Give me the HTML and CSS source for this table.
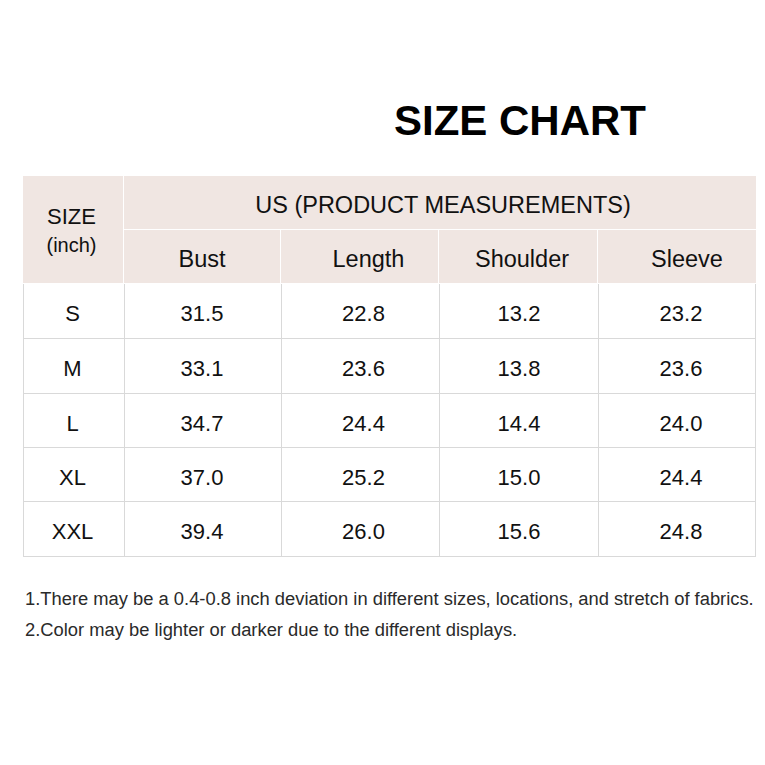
FILE: index.html
```html
<!DOCTYPE html>
<html>
<head>
<meta charset="utf-8">
<link rel="stylesheet" href="styles.css">
</head>
<body>
<div class="page">
  <h1 class="title">SIZE CHART</h1>
  <div class="chart">
    <div class="head">
      <div class="hcell size-cell"><span class="size-main">SIZE</span><span class="size-unit">(inch)</span></div>
      <div class="hcell group">US (PRODUCT MEASUREMENTS)</div>
      <div class="hcell c2">Bust</div>
      <div class="hcell c3">Length</div>
      <div class="hcell c4">Shoulder</div>
      <div class="hcell c5">Sleeve</div>
    </div>
    <div class="body">
      <div class="cell c1">S</div><div class="cell c2">31.5</div><div class="cell c3">22.8</div><div class="cell c4">13.2</div><div class="cell c5">23.2</div>
      <div class="cell c1">M</div><div class="cell c2">33.1</div><div class="cell c3">23.6</div><div class="cell c4">13.8</div><div class="cell c5">23.6</div>
      <div class="cell c1">L</div><div class="cell c2">34.7</div><div class="cell c3">24.4</div><div class="cell c4">14.4</div><div class="cell c5">24.0</div>
      <div class="cell c1">XL</div><div class="cell c2">37.0</div><div class="cell c3">25.2</div><div class="cell c4">15.0</div><div class="cell c5">24.4</div>
      <div class="cell c1">XXL</div><div class="cell c2">39.4</div><div class="cell c3">26.0</div><div class="cell c4">15.6</div><div class="cell c5">24.8</div>
    </div>
  </div>
  <div class="notes">
    <p>1.There may be a 0.4-0.8 inch deviation in different sizes, locations, and stretch of fabrics.</p>
    <p>2.Color may be lighter or darker due to the different displays.</p>
  </div>
</div>
</body>
</html>
```
FILE: styles.css
```css
html, body {
  margin: 0;
  padding: 0;
  background: #ffffff;
}

.page {
  width: 765px;
  height: 765px;
  font-family: "Liberation Sans", Arial, sans-serif;
  color: #111111;
}

.title {
  margin: 0;
  padding: 97px 0 0 394px;
  font-size: 42px;
  line-height: 48px;
  font-weight: bold;
  color: #000000;
}

.chart {
  margin: 31px 0 0 23px;
  width: 733px;
}

.head {
  display: grid;
  grid-template-columns: 100px 156px 157px 158px 1fr;
  grid-template-rows: 53px 53px;
  gap: 1px;
  padding-bottom: 1px;
  background: #ffffff;
}

.hcell {
  background: #f0e6e2;
  display: flex;
  align-items: center;
  justify-content: center;
  padding-top: 5px;
  font-size: 23.5px;
  color: #111111;
}

.size-cell {
  grid-row: 1 / span 2;
  flex-direction: column;
  font-size: 22px;
  line-height: 29px;
  padding-top: 2px;
  padding-right: 3px;
}

.size-unit {
  font-size: 20px;
}

.group {
  grid-column: 2 / span 4;
  padding-left: 6px;
}

.hcell.c3 { padding-left: 18px; }
.hcell.c4 { padding-left: 8px; }
.hcell.c5 { padding-left: 20px; }

.body {
  display: grid;
  grid-template-columns: 100px 156px 157px 158px 1fr;
  grid-template-rows: 54px 54px 53px 53px 54px;
  gap: 1px;
  padding: 0 1px 1px 1px;
  background: #d9d9d9;
}

.cell {
  background: #ffffff;
  display: flex;
  align-items: center;
  justify-content: center;
  padding-top: 6px;
  font-size: 22px;
  color: #111111;
}

.cell.c1 { padding-right: 3px; }
.cell.c2 { padding-right: 2px; }
.cell.c3 { padding-left: 6px; }
.cell.c5 { padding-left: 8px; }

.notes {
  margin-top: 26px;
  padding-left: 25px;
  font-size: 18.35px;
  line-height: 31px;
  color: #2a2a2a;
}

.notes p {
  margin: 0;
}
```
